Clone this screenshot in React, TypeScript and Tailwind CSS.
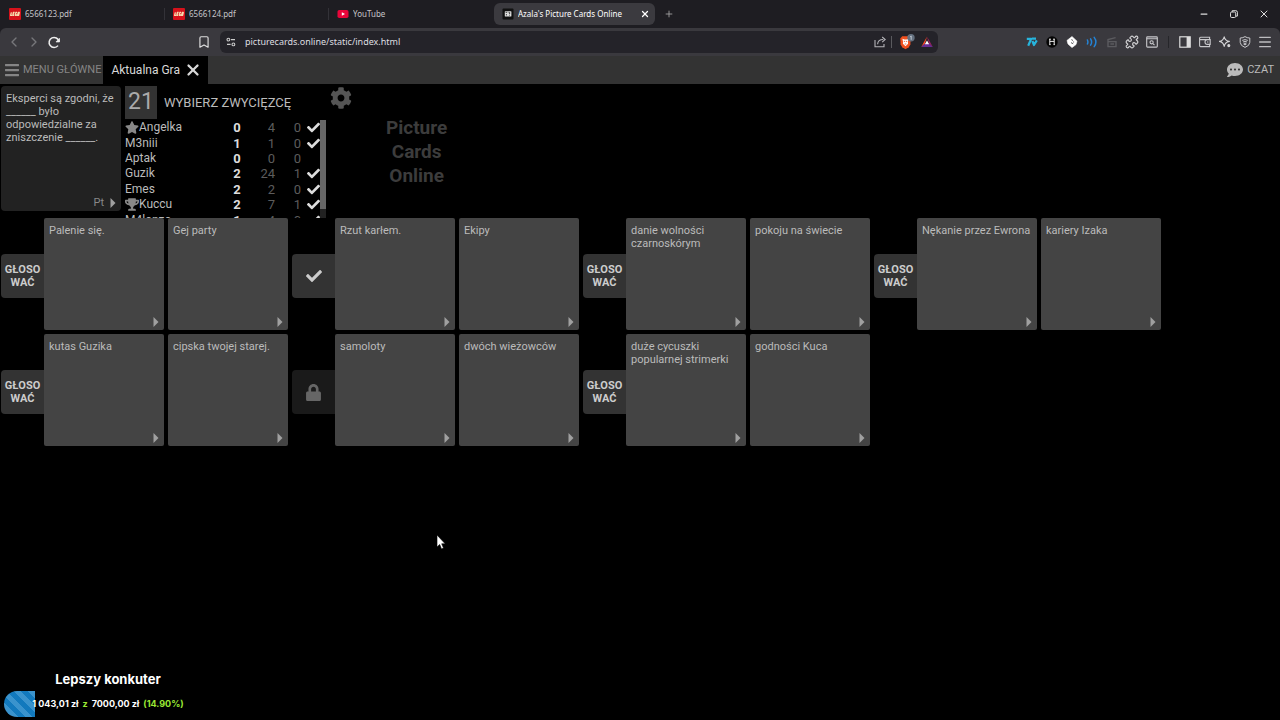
import type { ReactNode } from 'react'
import { FaBars, FaCheck, FaCog, FaLock, FaStar, FaTrophy, FaCommentDots } from 'react-icons/fa'
import { Bookmark, ChevronLeft, ChevronRight, Menu, Minus, Plus, Puzzle, X } from 'lucide-react'

type VoteState = 'vote' | 'voted' | 'locked'

interface Player {
  name: string
  score: number
  total: number
  wins: number
  ready: boolean
  badge?: 'star' | 'trophy'
}

const players: Player[] = [
  { name: 'Angelka', score: 0, total: 4, wins: 0, ready: true, badge: 'star' },
  { name: 'M3niii', score: 1, total: 1, wins: 0, ready: true },
  { name: 'Aptak', score: 0, total: 0, wins: 0, ready: false },
  { name: 'Guzik', score: 2, total: 24, wins: 1, ready: true },
  { name: 'Emes', score: 2, total: 2, wins: 0, ready: true },
  { name: 'Kuccu', score: 2, total: 7, wins: 1, ready: true, badge: 'trophy' },
  { name: 'M4lonzo', score: 1, total: 4, wins: 0, ready: true },
]

const entries: { state: VoteState; cards: [string, string] }[] = [
  { state: 'vote', cards: ['Palenie się.', 'Gej party'] },
  { state: 'voted', cards: ['Rzut karłem.', 'Ekipy'] },
  { state: 'vote', cards: ['danie wolności czarnoskórym', 'pokoju na świecie'] },
  { state: 'vote', cards: ['Nękanie przez Ewrona', 'kariery Izaka'] },
  { state: 'vote', cards: ['kutas Guzika', 'cipska twojej starej.'] },
  { state: 'locked', cards: ['samoloty', 'dwóch wieżowców'] },
  { state: 'vote', cards: ['duże cycuszki popularnej strimerki', 'godności Kuca'] },
]

function BrickIcon() {
  return (
    <svg viewBox="0 0 12 12" className="h-3 w-3 shrink-0">
      <rect width="12" height="12" rx="1" fill="#d5121b" />
      <path d="M2.400 4.400 1.600 7.400h1.500M5.600 4.400H4.400L3.800 7.400h1.300M4.200 5.900h1.100M8 4.400H6.900L6.300 7.400h1.100l.3-1.200M9.300 4.400h1l-.7 3h-1z" fill="none" stroke="#f6dcae" strokeWidth="1.300" strokeLinejoin="round" />
    </svg>
  )
}

function VideoIcon() {
  return (
    <svg viewBox="0 0 12 12" className="h-3 w-3 shrink-0">
      <rect x="0.5" y="2" width="11" height="8" rx="1.8" fill="#e8063a" />
      <path d="M4.8 4.2v3.6L8 6z" fill="#fff" />
    </svg>
  )
}

function CardsIcon() {
  return (
    <svg viewBox="0 0 12 12" className="h-3 w-3 shrink-0">
      <rect x="0.5" y="0.5" width="11" height="11" rx="1" fill="#111" />
      <rect x="2.8" y="3.2" width="6.6" height="5.4" rx="0.5" fill="#ddd" />
      <path d="M3.600 4.400h1.600M4.400 6v1.400M6.600 4.600l1.400.2-.6 1.200M7.200 7.200h.8" stroke="#222" strokeWidth="0.8" fill="none" />
    </svg>
  )
}

function ReloadIcon() {
  return (
    <svg viewBox="0 0 14 14" className="h-3.5 w-3.5">
      <path d="M11 10.6A5 5 0 1 1 12 6.4" fill="none" stroke="#eee" strokeWidth="1.5" />
      <path d="M9 6.900h3.500V3.400z" fill="#eee" stroke="#eee" strokeWidth="0.8" />
    </svg>
  )
}

function SiteSettingsIcon() {
  return (
    <svg viewBox="0 0 10 10" className="h-2.5 w-2.5 shrink-0" fill="none" stroke="#ccc" strokeWidth="1.1">
      <circle cx="2.4" cy="2.6" r="1.4" />
      <path d="M5 2.6h4M1 7.4h3.6" />
      <circle cx="7.4" cy="7.4" r="1.4" />
    </svg>
  )
}

function ShareIcon() {
  return (
    <svg viewBox="0 0 12 12" className="h-3 w-3" fill="none" stroke="#b4b4b8" strokeWidth="1.1">
      <path d="M1 4v6.8h9V8" />
      <path d="M3.6 8.2c.2-3 2-4.7 5.6-4.7M8.2 1l3 2.5-3 2.6" />
    </svg>
  )
}

function LionIcon() {
  return (
    <svg viewBox="0 0 16 16" className="h-4 w-4">
      <path d="m1.300 4.600 1.900-2.400h6.600l1.900 2.400-.3 6-1.700 2.600-3.200 2-3.200-2-1.700-2.600z" fill="#f0501e" />
      <path d="m3.400 4.800 2.100.6h2l2.100-.6-.7 3.200.2 1.800-2.600 2.400-2.600-2.400.2-1.800z" fill="#fff" />
      <path d="M4.800 7.400h1.300M6.900 7.400h1.300M5.700 10h1.600" stroke="#f0501e" strokeWidth="0.8" />
      <circle cx="12" cy="3.800" r="3.700" fill="#64707f" />
      <path d="m11.200 2.800 1-.8v3.800" fill="none" stroke="#d3dae4" strokeWidth="0.8" />
    </svg>
  )
}

function TriangleIcon() {
  return (
    <svg viewBox="0 0 12 12" className="h-3 w-3">
      <path d="M6 .5 4 7.4.2 11z" fill="#ff4724" />
      <path d="m6 .5 5.800 10.500L8 7.400z" fill="#9e1f63" />
      <path d="M.2 11h11.600L8 7.600H4z" fill="#662d91" />
      <path d="M6 4.4 8.200 8.200H3.800z" fill="#fff" />
    </svg>
  )
}

function ToolButton({ label, children }: { label: string; children: ReactNode }) {
  return (
    <button aria-label={label} className="flex h-5 w-5 items-center justify-center">
      {children}
    </button>
  )
}

function Extensions() {
  return (
    <div className="flex items-center">
      <ToolButton label="7TV">
        <svg viewBox="0 0 12 10" className="h-2.5 w-3" fill="none" stroke="#27b4dc" strokeWidth="2.200">
          <path d="M.8 1.8h4.4L2.2 8.8M6.400 4l1.600 4 2.800-4.600M6 1.600h4" strokeLinejoin="round" />
        </svg>
      </ToolButton>
      <ToolButton label="Reader">
        <svg viewBox="0 0 12 12" className="h-3 w-3">
          <circle cx="6" cy="6" r="5.7" fill="#050505" />
          <path d="M3.800 3.200v5.600M8.200 3.200v5.600M3.800 5.400h4.400M3 3.200h2M7 3.200h2M3.400 8.600h1.200M7.600 8.600h1.200" stroke="#e8e8e8" strokeWidth="1" />
        </svg>
      </ToolButton>
      <ToolButton label="Tags">
        <svg viewBox="0 0 12 12" className="h-3 w-3">
          <path d="m6 .5 5 4.7-1 3.4-4 3-4-3.6-1-3.600z" fill="#fff" stroke="#fff" strokeWidth="0.6" strokeLinejoin="round" />
          <path d="m5.4 3.6 1.6.9M5 6.6l2.2 1.2M7.6 5.5v1" stroke="#4a4a4d" strokeWidth="0.9" />
        </svg>
      </ToolButton>
      <ToolButton label="Sound">
        <svg viewBox="0 0 12 12" className="h-3 w-3" fill="none" stroke="#2484d6" strokeWidth="1.500" strokeLinecap="round">
          <path d="M1.4 4q1 2 0 4M4.600 2.800q2 3.200 0 6.400M8.200 1.400q3.400 4.600 0 9.200" />
        </svg>
      </ToolButton>
      <ToolButton label="Clips">
        <svg viewBox="0 0 12 12" className="h-3 w-3" fill="none" stroke="#5b5b5f" strokeWidth="1.4">
          <path d="M2 5.600h8v5H2zM2 5.600V3.600l7.600-2M4.400 8h3.600" />
        </svg>
      </ToolButton>
      <ToolButton label="Rozszerzenia">
        <Puzzle className="h-3.5 w-3.5 text-[#d0d0d2]" strokeWidth={2} />
      </ToolButton>
      <ToolButton label="Szukaj">
        <svg viewBox="0 0 12 12" className="h-3 w-3" fill="none" stroke="#c8c8cb" strokeWidth="1.1">
          <rect x="0.7" y="0.9" width="10.6" height="10.2" rx="0.8" />
          <path d="M.7 2.8h10.6M6.9 7.6l1.6 1.6" />
          <circle cx="5.6" cy="6.3" r="1.6" />
        </svg>
      </ToolButton>
      <div className="mx-1.5 h-3 w-px bg-[#26262a]" />
      <ToolButton label="Panel boczny">
        <svg viewBox="0 0 12 12" className="h-3 w-3">
          <rect x="0.8" y="0.8" width="10.4" height="10.4" fill="none" stroke="#ddd" strokeWidth="1.2" />
          <path d="M7.6 1h3.6v10H7.6z" fill="#ddd" />
        </svg>
      </ToolButton>
      <ToolButton label="Portfel">
        <svg viewBox="0 0 12 12" className="h-3 w-3" fill="none" stroke="#c8c8cb" strokeWidth="1.1">
          <path d="M10.6 3.6V1.2H1.6q-1 0-1 1v7.4q0 1 1 1h9V8.4M.8 3.6h10.4v4.8H8.4a2.4 2.4 0 0 1 0-4.8M8 6h1.4" />
        </svg>
      </ToolButton>
      <ToolButton label="Asystent">
        <svg viewBox="0 0 12 12" className="h-3 w-3" fill="none" stroke="#d4d4d6" strokeWidth="1.1" strokeLinejoin="round">
          <path d="M5.200.8Q6 4.600 10.400 5.400 6 6.200 5.200 10.400 4.400 6.200.4 5.400 4.400 4.600 5.200.8z" />
          <circle cx="9.8" cy="9.6" r="1" fill="#d4d4d6" />
        </svg>
      </ToolButton>
      <ToolButton label="VPN">
        <svg viewBox="0 0 12 12" className="h-3 w-3" fill="none" stroke="#c8c8cb" strokeWidth="1">
          <path d="M6 .6q2 1.4 4.8 1.4v4.4Q10.600 9.800 6 11.400 1.400 9.800 1.200 6.400V2Q4 2 6 .6z" />
          <path d="M3.200 4.400q2.800-1.600 5.600 0M4 6q2-1.200 4 0M5 7.400q1-.6 2 0V8.600H5z" />
        </svg>
      </ToolButton>
      <ToolButton label="Menu">
        <Menu className="h-4 w-4 text-[#bdbdc0]" strokeWidth={2} />
      </ToolButton>
    </div>
  )
}

function BrowserTab({ icon, title }: { icon: ReactNode; title: string }) {
  return (
    <button className="flex h-full w-41 items-center gap-1 px-2 text-left">
      {icon}
      <span className="flex-1 truncate text-[#c4c4c8]">{title}</span>
    </button>
  )
}

function BrowserChrome() {
  return (
    <div className="bg-[#1e1d22] font-['Noto_Sans',sans-serif] text-[8px]">
      <div className="flex h-7 items-center pl-px">
        <BrowserTab icon={<BrickIcon />} title="6566123.pdf" />
        <div className="-ml-px h-3 w-px bg-[#333238]" />
        <BrowserTab icon={<BrickIcon />} title="6566124.pdf" />
        <div className="-ml-px h-3 w-px bg-[#333238]" />
        <BrowserTab icon={<VideoIcon />} title="YouTube" />
        <div className="ml-px flex h-[22px] w-[161px] items-center gap-1 rounded-md bg-[#3b3a3f] pl-2 pr-1">
          <CardsIcon />
          <span className="flex-1 truncate text-white">Azala's Picture Cards Online</span>
          <button aria-label="Zamknij kartę" className="flex h-3 w-3 items-center justify-center">
            <X className="h-2.5 w-2.5 text-white" strokeWidth={3} />
          </button>
        </div>
        <button aria-label="Nowa karta" className="ml-2 flex h-3 w-3 items-center justify-center">
          <Plus className="h-2.5 w-2.5 text-[#aaa]" />
        </button>
        <div className="ml-auto flex items-center gap-3.5 pr-2">
          <button aria-label="Minimalizuj" className="flex h-4 w-4 items-center justify-center">
            <Minus className="h-2.5 w-2.5 text-[#ddd]" strokeWidth={3} />
          </button>
          <button aria-label="Przywróć" className="flex h-4 w-4 items-center justify-center">
            <svg viewBox="0 0 8 8" className="h-2 w-2" fill="none" stroke="#ddd" strokeWidth="1">
              <rect x="0.5" y="2" width="5.200" height="5.500" rx="1.200" />
              <path d="M2.200 2V.7h3.600q1.600 0 1.600 1.600v3.800H6" />
            </svg>
          </button>
          <button aria-label="Zamknij" className="flex h-4 w-4 items-center justify-center">
            <X className="h-3 w-3 text-[#ddd]" strokeWidth={2} />
          </button>
        </div>
      </div>

      <div className="flex h-7 items-center rounded-t-md bg-[#3a393e] pl-1 pr-[5px]">
        <ToolButton label="Wstecz">
          <ChevronLeft className="h-4 w-4 text-[#77777b]" strokeWidth={2} />
        </ToolButton>
        <ToolButton label="Dalej">
          <ChevronRight className="h-4 w-4 text-[#77777b]" strokeWidth={2} />
        </ToolButton>
        <ToolButton label="Odśwież">
          <ReloadIcon />
        </ToolButton>
        <div className="ml-[130px] mr-[6px]">
          <ToolButton label="Zakładka">
            <Bookmark className="h-3.5 w-3.5 text-[#ddd]" strokeWidth={2} />
          </ToolButton>
        </div>
        <div className="flex h-[22px] flex-1 items-center rounded-md bg-[#242329] pl-1.5 pr-px">
          <SiteSettingsIcon />
          <input
            aria-label="Adres"
            defaultValue="picturecards.online/static/index.html"
            className="ml-[9px] min-w-0 flex-1 bg-transparent text-[9px] text-[#dedee0] outline-none"
          />
          <ToolButton label="Udostępnij">
            <ShareIcon />
          </ToolButton>
          <div className="mx-px h-3 w-px bg-[#5a5a5e]" />
          <div className="ml-1 flex">
            <ToolButton label="Tarcze">
              <LionIcon />
            </ToolButton>
            <ToolButton label="Nagrody">
              <TriangleIcon />
            </ToolButton>
          </div>
        </div>
        <div className="ml-[84px]">
          <Extensions />
        </div>
      </div>
    </div>
  )
}

function GameNav() {
  return (
    <nav className="flex h-7 items-center bg-[#333] text-[12px]">
      <button className="flex h-full items-center gap-1 pl-[5px] pr-0.5 text-[11px] text-[#858585]">
        <FaBars className="h-4 w-3.5" />
        MENU GŁÓWNE
      </button>
      <div className="flex h-full items-center gap-1 bg-black pl-2 pr-1.5 text-[#d8d8d8]">
        <span>Aktualna Gra</span>
        <button aria-label="Zamknij grę">
          <X className="h-[18px] w-[18px]" strokeWidth={3} />
        </button>
      </div>
      <button className="ml-auto flex items-center gap-1 pr-1.5 text-[11px] text-[#bbb]">
        <FaCommentDots className="h-4 w-4" />
        CZAT
      </button>
    </nav>
  )
}

function Caret() {
  return (
    <svg viewBox="0 0 6 10" className="h-2.5 w-1.5">
      <path d="M.5 0 5.500 5 .5 10z" fill="#a0a0a0" />
    </svg>
  )
}

function Scoreboard() {
  return (
    <div className="flex h-[98px] w-[201px] overflow-hidden">
      <table className="h-[108px] w-[195px] shrink-0 table-fixed border-collapse text-[13px] leading-[15px] text-[#bbb]">
        <colgroup>
          <col />
          <col className="w-7" />
          <col className="w-6" />
          <col className="w-[26px]" />
          <col className="w-[19px]" />
        </colgroup>
        <tbody>
          {players.map((p) => (
            <tr key={p.name}>
              <td className="p-0 text-[12px]">
                <span className="flex items-center">
                  {p.badge === 'star' && <FaStar className="h-[13px] w-[14px] text-[#888]" />}
                  {p.badge === 'trophy' && <FaTrophy className="h-[13px] w-[14px] text-[#888]" />}
                  {p.name}
                </span>
              </td>
              <td className="p-0 text-center font-bold text-[#ddd]">{p.score}</td>
              <td className="p-0 text-right text-[#5c5c5c]">{p.total}</td>
              <td className="p-0 text-right text-[#5c5c5c]">{p.wins}</td>
              <td className="p-0">
                {p.ready && <FaCheck className="ml-auto h-[13px] w-[13px] text-[#ddd]" />}
              </td>
            </tr>
          ))}
        </tbody>
      </table>
      <div className="w-1.5 shrink-0 bg-[#222]">
        <div className="h-[89px] bg-[#666]" />
      </div>
    </div>
  )
}

function GameHeader() {
  return (
    <header className="flex h-[134px] items-start pl-px pt-0.5">
      <div className="flex h-[125px] w-[120px] flex-col justify-between rounded-sm bg-[#222] px-[5px] pb-[3px] pt-1.5 text-[11px] leading-[13px] text-[#bbb]">
        <p>Eksperci są zgodni, że ______ było odpowiedzialne za zniszczenie ______.</p>
        <div className="flex items-center justify-end gap-1.5 text-[11px] leading-[10px] text-[#888]">
          Pt
          <Caret />
        </div>
      </div>
      <div className="ml-1">
        <div className="flex h-[34px] items-start">
          <div className="flex h-[33px] w-8 items-center justify-center bg-[#333] text-[23px] text-[#aaa]">21</div>
          <h1 className="ml-[7px] flex h-[33px] items-center text-[13px] text-[#bbb]">WYBIERZ ZWYCIĘZCĘ</h1>
        </div>
        <Scoreboard />
      </div>
      <button aria-label="Ustawienia" className="ml-1 mt-px">
        <FaCog className="h-[22px] w-[22px] text-[#555]" />
      </button>
      <div className="ml-[34px] mt-[30px] text-center text-[19px] font-bold leading-6 text-[#3c3c3c]">
        Picture
        <br />
        Cards
        <br />
        Online
      </div>
    </header>
  )
}

function VoteButton({ state }: { state: VoteState }) {
  if (state === 'voted') {
    return (
      <button aria-label="Zagłosowano" className="mt-9 flex h-[44px] w-[43px] items-center justify-center rounded-l bg-[#333] text-[#ccc]">
        <FaCheck className="h-4 w-4" />
      </button>
    )
  }
  if (state === 'locked') {
    return (
      <button aria-label="Zablokowane" disabled className="mt-9 flex h-[44px] w-[43px] items-center justify-center rounded-l bg-[#1a1a1a] text-[#666]">
        <FaLock className="h-[17px] w-[17px]" />
      </button>
    )
  }
  return (
    <button className="mt-9 h-[44px] w-[43px] rounded-l bg-[#333] text-center text-[11px] font-bold leading-[13px] text-[#ccc]">
      GŁOSO
      <br />
      WAĆ
    </button>
  )
}

function Card({ text }: { text: string }) {
  return (
    <div className="flex h-28 w-[120px] flex-col justify-between rounded-xs bg-[#444] px-[5px] pb-[3px] pt-1.5 text-[11px] leading-[13px] text-[#bbb]">
      <p>{text}</p>
      <div className="flex justify-end">
        <Caret />
      </div>
    </div>
  )
}

function DonationGoal() {
  return (
    <div className="absolute bottom-[3px] left-1 w-52 text-center font-['Inter',sans-serif] font-bold text-white">
      <div className="text-[13px] leading-4">Lepszy konkuter</div>
      <div className="relative mt-1 flex h-[26px] items-center justify-center overflow-hidden rounded-l-full text-[9px]">
        <div className="absolute inset-y-0 left-0 w-[15%] bg-[repeating-linear-gradient(45deg,#1279bd_0_5px,#3a93cd_5px_10px)]" />
        <div className="relative flex gap-1 whitespace-nowrap">
          <span>1 043,01 zł</span>
          <span className="text-[#9be834]">z</span>
          <span>7000,00 zł</span>
          <span className="text-[#9be834]">(14.90%)</span>
        </div>
      </div>
    </div>
  )
}

export default function App() {
  return (
    <div className="relative min-h-screen overflow-hidden bg-black font-['Roboto',sans-serif]">
      <BrowserChrome />
      <GameNav />
      <GameHeader />
      <main className="flex flex-wrap gap-1 pl-px">
        {entries.map((entry) => (
          <section key={entry.cards[0]} className="flex items-start">
            <VoteButton state={entry.state} />
            <div className="flex gap-1">
              <Card text={entry.cards[0]} />
              <Card text={entry.cards[1]} />
            </div>
          </section>
        ))}
      </main>

      <DonationGoal />

      {/* mouse pointer */}
      <svg viewBox="0 0 10 16" className="absolute left-[436px] top-[534px] h-4 w-2.5">
        <path d="M1 1v12l2.700-2.500L5.500 15l2-.9-1.800-4.300H9.200z" fill="#fff" stroke="#000" strokeWidth="0.6" />
      </svg>
    </div>
  )
}
